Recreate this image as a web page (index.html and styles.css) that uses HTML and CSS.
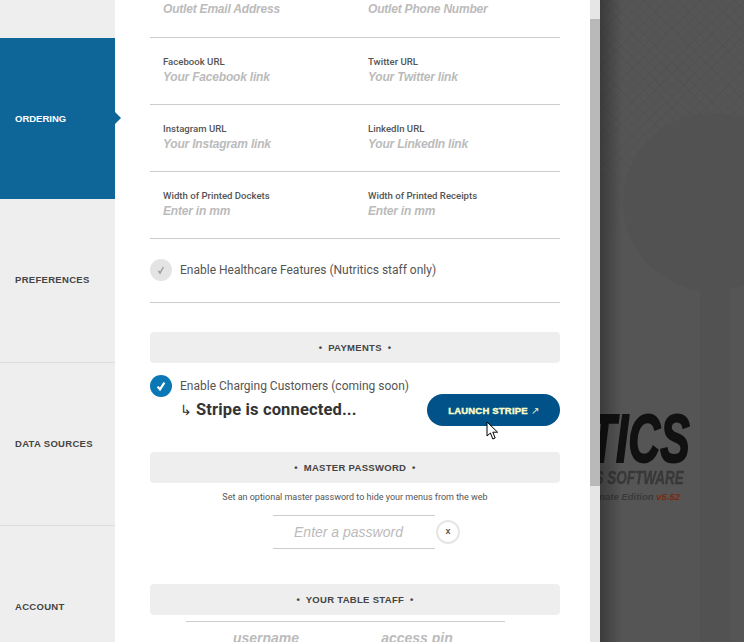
FILE: index.html
```html
<!DOCTYPE html>
<html lang="en">
<head>
    <meta charset="UTF-8">
    <meta name="viewport" content="width=device-width, initial-scale=1.0">
    <title>Settings</title>
    <link rel="stylesheet" href="styles.css">
</head>
<body>
    <aside class="sidebar">
        <div class="side-top"></div>
        <div class="side-item active">ORDERING</div>
        <div class="side-item">PREFERENCES</div>
        <div class="side-item lined">DATA SOURCES</div>
        <div class="side-item lined">ACCOUNT</div>
    </aside>

    <main class="panel">
        <div class="row first">
            <div class="field"><span>Outlet Email Address</span></div>
            <div class="field"><span>Outlet Phone Number</span></div>
        </div>
        <div class="row">
            <div class="field"><label>Facebook URL</label><span>Your Facebook link</span></div>
            <div class="field"><label>Twitter URL</label><span>Your Twitter link</span></div>
        </div>
        <div class="row">
            <div class="field"><label>Instagram URL</label><span>Your Instagram link</span></div>
            <div class="field"><label>LinkedIn URL</label><span>Your LinkedIn link</span></div>
        </div>
        <div class="row">
            <div class="field"><label>Width of Printed Dockets</label><span>Enter in mm</span></div>
            <div class="field"><label>Width of Printed Receipts</label><span>Enter in mm</span></div>
        </div>

        <div class="check-row healthcare">
            <span class="tick off">
                <svg width="10" height="10" viewBox="0 0 10 10"><path d="M2.4 5.8 L4 8 L7.4 2" fill="none" stroke="#a0a0a0" stroke-width="1.5"/></svg>
            </span>
            <span class="check-text">Enable Healthcare Features (Nutritics staff only)</span>
        </div>

        <div class="bar payments">&bull;&nbsp; PAYMENTS &nbsp;&bull;</div>

        <div class="stripe">
            <div class="stripe-left">
                <div class="check-row">
                    <span class="tick on">
                        <svg width="12" height="12" viewBox="0 0 12 12"><path d="M2.6 6.6 L5 9.4 L9.4 2.6" fill="none" stroke="#fff" stroke-width="2.2"/></svg>
                    </span>
                    <span class="check-text">Enable Charging Customers (coming soon)</span>
                </div>
                <div class="connected"><span class="hook">&#8627;</span>Stripe is connected...</div>
            </div>
            <button class="launch">LAUNCH STRIPE <span class="launch-arrow">&#8599;</span></button>
        </div>

        <div class="bar master">&bull;&nbsp; MASTER PASSWORD &nbsp;&bull;</div>
        <p class="hint">Set an optional master password to hide your menus from the web</p>
        <div class="password">
            <div class="password-input">Enter a password</div>
            <span class="clear">x</span>
        </div>

        <div class="bar staff">&bull;&nbsp; YOUR TABLE STAFF &nbsp;&bull;</div>
        <div class="staff-row">
            <span>username</span>
            <span>access pin</span>
        </div>
    </main>

    <div class="scrollbar">
        <div class="thumb"></div>
    </div>

    <div class="backdrop">
        <div class="pattern"></div>
        <svg class="emblem" width="144" height="642" viewBox="0 0 144 642">
            <circle cx="112" cy="202" r="89" fill="#525252"/>
            <rect x="100" y="280" width="30" height="362" fill="#525252"/>
        </svg>
        <div class="logo">
            <div class="logo-name">NUTRITICS</div>
            <div class="logo-sub">NUTRITION ANALYSIS SOFTWARE</div>
            <div class="logo-edition">Ultimate Edition <b>v5.52</b></div>
        </div>
        <div class="edge"></div>
    </div>

    <svg class="cursor" width="14" height="20" viewBox="0 0 14 20">
        <path d="M1 1 L1 15 L4.4 12 L6.8 18 L9.2 17 L6.8 11.2 L11.6 11.2 Z" fill="#fff" stroke="#000" stroke-width="1"/>
    </svg>
</body>
</html>
```

FILE: styles.css
```css
html, body {
    height: 100%;
}

body {
    margin: 0;
    display: flex;
    height: 642px;
    overflow: hidden;
    font-family: "Liberation Sans", Arial, sans-serif;
    background: #555555;
    position: relative;
}

/* left menu */
.sidebar {
    width: 115px;
    flex: none;
    background: #eeeeee;
}

.side-top {
    height: 38px;
}

.side-item {
    height: 163px;
    box-sizing: border-box;
    display: flex;
    align-items: center;
    padding: 0 0 2px 15px;
    font-size: 9.5px;
    font-weight: bold;
    letter-spacing: 0.3px;
    color: #444;
}

.side-item.active {
    height: 161px;
    padding-bottom: 0;
    background: #0e6598;
    color: #fff;
    letter-spacing: 0;
    position: relative;
}

.side-item.active::after {
    content: "";
    position: absolute;
    left: 100%;
    top: 74px;
    border-left: 6px solid #0e6598;
    border-top: 6.5px solid transparent;
    border-bottom: 6.5px solid transparent;
}

.side-item.lined {
    border-top: 1px solid #dddddd;
}

/* form panel */
.panel {
    width: 475px;
    flex: none;
    box-sizing: border-box;
    padding: 0 30px 0 35px;
    background: #fff;
    overflow: hidden;
}

.row {
    display: grid;
    grid-template-columns: 205px 205px;
    height: 67px;
    box-sizing: border-box;
    border-bottom: 1px solid #cccccc;
    padding: 17px 0 0 13px;
}

.row.first {
    height: 38px;
    padding-top: 1px;
}

.field label {
    display: block;
    font-family: Roboto, Arial, sans-serif;
    font-size: 9.6px;
    font-weight: 500;
    line-height: 14px;
    color: #555;
}

.field span {
    display: block;
    font-size: 12px;
    font-weight: bold;
    font-style: italic;
    letter-spacing: -0.2px;
    line-height: 17px;
    color: #bbbbbb;
}

.check-row {
    display: flex;
    align-items: center;
    gap: 8px;
}

.healthcare {
    height: 64px;
    box-sizing: border-box;
    border-bottom: 1px solid #cccccc;
    padding-bottom: 2px;
}

.tick {
    width: 22px;
    height: 22px;
    border-radius: 50%;
    display: flex;
    align-items: center;
    justify-content: center;
}

.tick.off {
    background: #e4e4e4;
}

.tick.on {
    background: #0a78b5;
}

.check-text {
    font-family: Roboto, Arial, sans-serif;
    font-size: 12px;
    color: #555;
}

.bar {
    height: 31px;
    line-height: 31px;
    background: #eeeeee;
    border-radius: 4px;
    text-align: center;
    font-size: 9.5px;
    font-weight: bold;
    letter-spacing: 0.3px;
    color: #444;
}

.payments {
    margin-top: 29px;
}

.stripe {
    height: 89px;
    display: flex;
    justify-content: space-between;
    box-sizing: border-box;
    padding-top: 12px;
}

.connected {
    margin: 3px 0 0 30px;
    font-family: Roboto, Arial, sans-serif;
    font-size: 16.5px;
    font-weight: bold;
    letter-spacing: 0.15px;
    line-height: 20px;
    color: #333;
}

.hook {
    display: inline-block;
    width: 16px;
    font-size: 14px;
    font-weight: normal;
}

.launch {
    width: 133px;
    height: 32px;
    margin-top: 19px;
    border: none;
    border-radius: 16px;
    background: #005288;
    color: #fdfdc8;
    font-family: "Liberation Sans", Arial, sans-serif;
    font-size: 9.5px;
    font-weight: bold;
    letter-spacing: 0.2px;
    -webkit-text-stroke: 0.4px #fdfdc8;
    padding: 0;
}

.launch-arrow {
    font-weight: normal;
    -webkit-text-stroke: 0;
}

.hint {
    margin: 8px 0 0;
    font-family: Roboto, Arial, sans-serif;
    text-align: center;
    font-size: 9px;
    line-height: 13px;
    color: #555;
}

.password {
    display: flex;
    align-items: center;
    margin: 11px 0 0 123px;
}

.password-input {
    width: 162px;
    height: 34px;
    box-sizing: border-box;
    padding-right: 11px;
    border-top: 1px solid #cccccc;
    border-bottom: 1px solid #cccccc;
    text-align: center;
    font-size: 14px;
    font-style: italic;
    line-height: 32px;
    color: #bbbbbb;
}

.clear {
    width: 24px;
    height: 24px;
    box-sizing: border-box;
    margin-left: 1px;
    border: 2px solid #e6e6e6;
    border-radius: 50%;
    text-align: center;
    font-size: 9px;
    font-weight: bold;
    line-height: 18px;
    color: #555;
}

.staff {
    margin-top: 35px;
}

.staff-row {
    margin: 6px 55px 0 36px;
    border-top: 1px solid #cccccc;
    display: flex;
    padding-top: 8px;
    font-size: 14px;
    font-weight: bold;
    font-style: italic;
    color: #bbbbbb;
}

.staff-row span:first-child {
    width: 160px;
    text-align: center;
}

.staff-row span:last-child {
    width: 142px;
    text-align: center;
}

/* scrollbar of the panel */
.scrollbar {
    width: 10px;
    flex: none;
    background: #e6e6e6;
    padding-top: 19px;
    box-sizing: border-box;
}

.thumb {
    height: 467px;
    background: #b9b9b9;
}

/* dimmed page behind the panel */
.backdrop {
    flex: 1;
    position: relative;
    overflow: hidden;
    background: #555555;
}

.pattern {
    position: absolute;
    left: 0;
    right: 0;
    top: 0;
    height: 240px;
    background:
        repeating-linear-gradient(45deg, rgba(0, 0, 0, 0.035) 0 1px, transparent 1px 8px),
        repeating-linear-gradient(-45deg, rgba(0, 0, 0, 0.035) 0 1px, transparent 1px 8px);
    -webkit-mask-image: linear-gradient(to bottom, #000 40%, transparent);
}

.emblem {
    position: absolute;
    left: 0;
    top: 0;
}

.edge {
    position: absolute;
    left: 0;
    top: 0;
    bottom: 0;
    width: 22px;
    background: linear-gradient(to right, rgba(0, 0, 0, 0.3), transparent);
}

.logo {
    position: absolute;
    right: 54px;
    top: 406px;
    text-align: right;
    white-space: nowrap;
    font-style: italic;
    font-weight: bold;
}

.logo-name {
    font-size: 68px;
    line-height: 64px;
    color: #111;
    -webkit-text-stroke: 2px #111;
    transform: scaleX(0.65);
    transform-origin: right center;
}

.logo-sub {
    font-size: 18px;
    line-height: 17px;
    margin: 0 6px 0 0;
    color: #383838;
    -webkit-text-stroke: 0.3px #383838;
    transform: scaleX(0.75);
    transform-origin: right center;
}

.logo-edition {
    font-size: 9.5px;
    line-height: 12px;
    margin: 4px 10px 0 0;
    color: #3a3a3a;
}

.logo-edition b {
    color: #7c2a0e;
}

.cursor {
    position: absolute;
    left: 486px;
    top: 421px;
}
```
